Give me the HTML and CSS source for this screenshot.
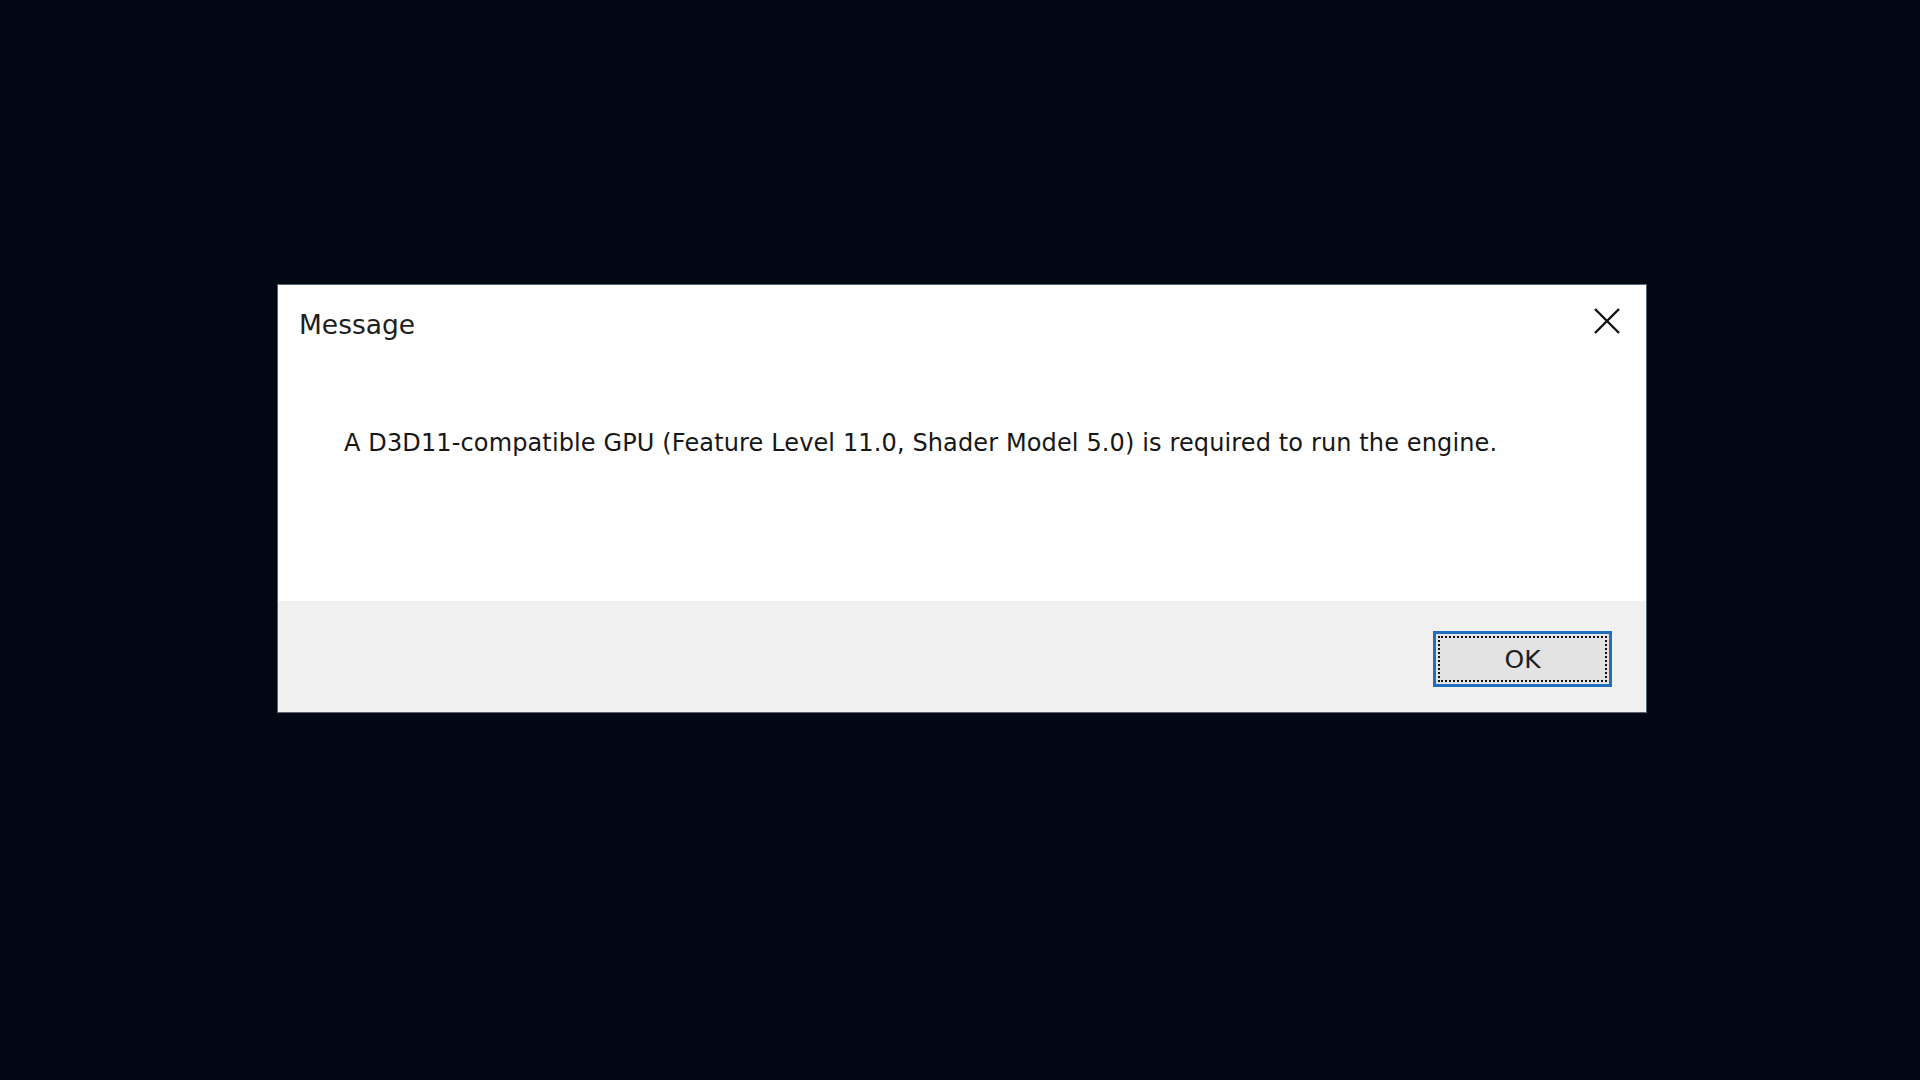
FILE: index.html
```html
<!DOCTYPE html>
<html lang="en">
<head>
<meta charset="utf-8">
<title>Message</title>
<link rel="stylesheet" href="styles.css">
</head>
<body>
<div class="screen">
  <div class="dialog">
    <div class="main">
      <div class="titlebar">
        <div class="title">Message</div>
        <svg class="close" width="26" height="26" viewBox="0 0 26 26" aria-label="Close">
          <path d="M1 1 L25 25 M25 1 L1 25" stroke="#111" stroke-width="2.4" fill="none"/>
        </svg>
      </div>
      <p class="message">A D3D11-compatible GPU (Feature Level 11.0, Shader Model 5.0) is required to run the engine.</p>
    </div>
    <div class="footer">
      <button class="ok">OK</button>
    </div>
  </div>
</div>
</body>
</html>
```

FILE: styles.css
```css
html, body {
  margin: 0;
  padding: 0;
  background: #020812;
  height: 100%;
}
.screen {
  padding: 284px 0 0 277px;
}
.dialog {
  width: 1368px;
  border: 1px solid #56646f;
  background: #ffffff;
  font-family: "DejaVu Sans", sans-serif;
  color: #1a1a1a;
}
.main {
  height: 316px;
  display: flex;
  flex-direction: column;
}
.titlebar {
  display: flex;
  justify-content: space-between;
  align-items: flex-start;
  padding: 20px 26px 0 21px;
  height: 40px;
}
.title {
  font-size: 26.5px;
  line-height: 40px;
  color: #1e1e1e;
}
.close {
  margin-top: 3px;
  display: block;
}
.message {
  margin: 82px 0 0 66px;
  font-size: 24px;
  line-height: 32px;
  letter-spacing: 0.13px;
  color: #161616;
}
.footer {
  height: 111px;
  background: #f0f0f0;
  display: flex;
  justify-content: flex-end;
  align-items: flex-start;
  padding: 30px 34px 0 0;
  box-sizing: border-box;
}
.ok {
  width: 179px;
  height: 56px;
  box-sizing: border-box;
  border: 3px solid #1f6fbd;
  background: #e3e3e3;
  outline: 2px dotted #111;
  outline-offset: -7px;
  font-family: "DejaVu Sans", sans-serif;
  font-size: 25px;
  color: #1e1e1e;
  padding: 0;
}
```
